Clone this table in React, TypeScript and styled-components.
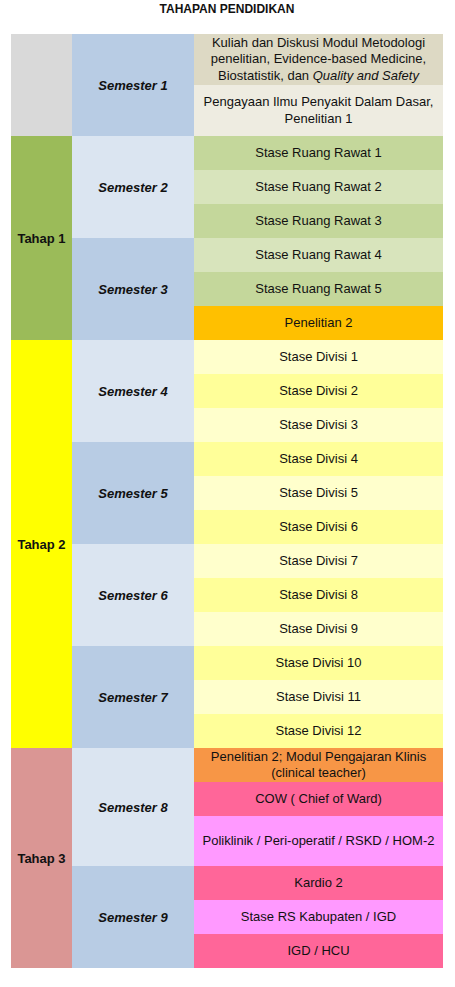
import styled, { createGlobalStyle } from 'styled-components';

type Item = { label: React.ReactNode; bg: string; h?: number };
type Semester = { name: string; bg: string; items: Item[] };
type Tahap = { name: string; bg: string; semesters: Semester[] };

const DARK = '#b8cce4';
const LIGHT = '#dbe5f1';

const rr = (n: number, bg: string): Item => ({ label: `Stase Ruang Rawat ${n}`, bg });
const div = (n: number): Item => ({
  label: `Stase Divisi ${n}`,
  bg: n % 2 === 1 ? '#ffffcc' : '#ffff99',
});

const data: Tahap[] = [
  {
    name: '',
    bg: '#d9d9d9',
    semesters: [
      {
        name: 'Semester 1',
        bg: DARK,
        items: [
          {
            label: (
              <>
                Kuliah dan Diskusi Modul Metodologi penelitian, Evidence-based
                Medicine, Biostatistik, dan <i>Quality and Safety</i>
              </>
            ),
            bg: '#ddd9c4',
            h: 51,
          },
          {
            label: 'Pengayaan Ilmu Penyakit Dalam Dasar, Penelitian 1',
            bg: '#eeece1',
            h: 51,
          },
        ],
      },
    ],
  },
  {
    name: 'Tahap 1',
    bg: '#9bbb59',
    semesters: [
      {
        name: 'Semester 2',
        bg: LIGHT,
        items: [rr(1, '#c4d79b'), rr(2, '#d8e4bc'), rr(3, '#c4d79b')],
      },
      {
        name: 'Semester 3',
        bg: DARK,
        items: [
          rr(4, '#d8e4bc'),
          rr(5, '#c4d79b'),
          { label: 'Penelitian 2', bg: '#ffc000' },
        ],
      },
    ],
  },
  {
    name: 'Tahap 2',
    bg: '#ffff00',
    semesters: [4, 5, 6, 7].map((s, i) => ({
      name: `Semester ${s}`,
      bg: i % 2 === 0 ? LIGHT : DARK,
      items: [1, 2, 3].map((k) => div(i * 3 + k)),
    })),
  },
  {
    name: 'Tahap 3',
    bg: '#da9694',
    semesters: [
      {
        name: 'Semester 8',
        bg: LIGHT,
        items: [
          {
            label: 'Penelitian 2; Modul Pengajaran Klinis (clinical teacher)',
            bg: '#f79646',
          },
          { label: 'COW ( Chief of Ward)', bg: '#ff6699' },
          {
            label: 'Poliklinik / Peri-operatif / RSKD / HOM-2',
            bg: '#ff99ff',
            h: 50,
          },
        ],
      },
      {
        name: 'Semester 9',
        bg: DARK,
        items: [
          { label: 'Kardio 2', bg: '#ff6699' },
          { label: 'Stase RS Kabupaten / IGD', bg: '#ff99ff' },
          { label: 'IGD / HCU', bg: '#ff6699' },
        ],
      },
    ],
  },
];

const GlobalStyle = createGlobalStyle`
  body {
    margin: 0;
    background: #ffffff;
    font-family: "Liberation Sans", Arial, sans-serif;
    color: #111111;
  }
`;

const Page = styled.div`
  width: 455px;
  padding: 0 12px 19px 11px;
  box-sizing: border-box;
`;

const Title = styled.h1`
  margin: 0;
  height: 34px;
  padding-top: 2px;
  box-sizing: border-box;
  text-align: center;
  font-size: 12px;
  line-height: 15px;
  font-weight: bold;
  color: #111;
`;

const Table = styled.div`
  display: flex;
  flex-direction: column;
  width: 432px;
`;

const Band = styled.div`
  display: flex;
`;

const StageCell = styled.div<{ $bg: string }>`
  width: 61px;
  flex: none;
  display: flex;
  align-items: center;
  justify-content: center;
  background: ${(p) => p.$bg};
  font-size: 13px;
  font-weight: bold;
`;

const SemesterList = styled.div`
  flex: 1;
  display: flex;
  flex-direction: column;
`;

const SemesterRow = styled.div`
  display: flex;
`;

const SemesterCell = styled.div<{ $bg: string }>`
  width: 122px;
  flex: none;
  display: flex;
  align-items: center;
  justify-content: center;
  background: ${(p) => p.$bg};
  font-size: 13px;
  font-weight: bold;
  font-style: italic;
`;

const ItemList = styled.div`
  flex: 1;
  display: flex;
  flex-direction: column;
`;

const ItemCell = styled.div<{ $bg: string; $h: number }>`
  height: ${(p) => p.$h}px;
  display: flex;
  align-items: center;
  justify-content: center;
  padding: 0 4px;
  box-sizing: border-box;
  background: ${(p) => p.$bg};
  text-align: center;
  font-size: 13px;
  line-height: 16.5px;
`;

export default function App() {
  return (
    <Page>
      <GlobalStyle />
      <Title>TAHAPAN PENDIDIKAN</Title>
      <Table>
        {data.map((t, ti) => (
          <Band key={ti}>
            <StageCell $bg={t.bg}>{t.name}</StageCell>
            <SemesterList>
              {t.semesters.map((s) => (
                <SemesterRow key={s.name}>
                  <SemesterCell $bg={s.bg}>{s.name}</SemesterCell>
                  <ItemList>
                    {s.items.map((it, ii) => (
                      <ItemCell key={ii} $bg={it.bg} $h={it.h ?? 34}>
                        <span>{it.label}</span>
                      </ItemCell>
                    ))}
                  </ItemList>
                </SemesterRow>
              ))}
            </SemesterList>
          </Band>
        ))}
      </Table>
    </Page>
  );
}
